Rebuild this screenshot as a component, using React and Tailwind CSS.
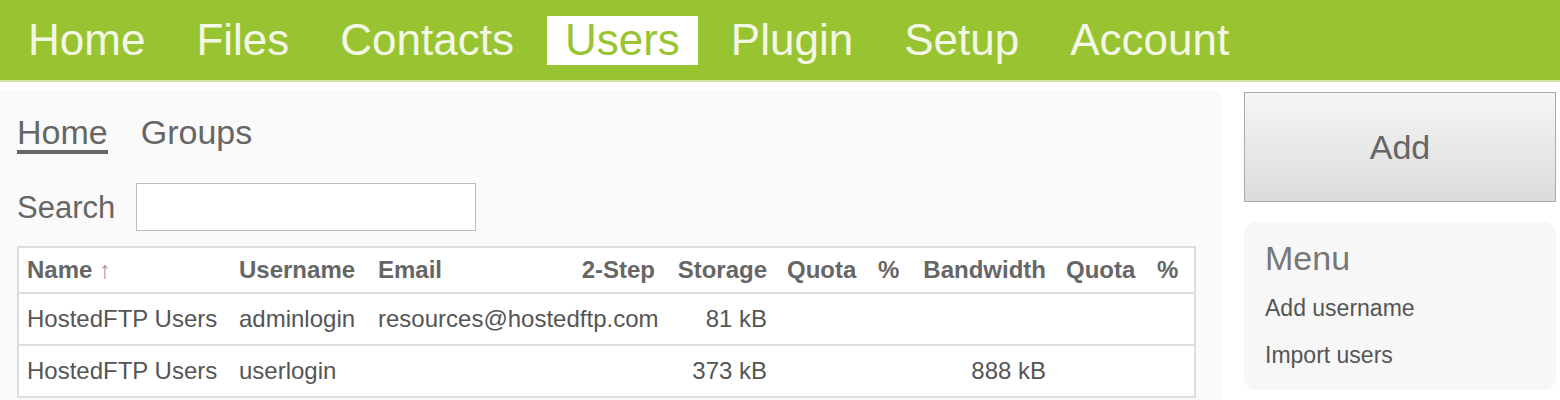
import React from "react";

const navItems = ["Home", "Files", "Contacts", "Users", "Plugin", "Setup", "Account"];

const columns = [
  { label: "Name", width: "w-[213px]", align: "text-left", sort: true },
  { label: "Username", width: "w-[139px]", align: "text-left" },
  { label: "Email", width: "w-[201px]", align: "text-left" },
  { label: "2-Step", width: "w-[96px]", align: "text-right" },
  { label: "Storage", width: "w-[112px]", align: "text-right" },
  { label: "Quota", width: "w-[91px]", align: "text-left" },
  { label: "%", width: "w-[43px]", align: "text-left" },
  { label: "Bandwidth", width: "w-[145px]", align: "text-right" },
  { label: "Quota", width: "w-[91px]", align: "text-left" },
  { label: "%", width: "w-[46px]", align: "text-left" },
];

const users = [
  ["HostedFTP Users", "adminlogin", "resources@hostedftp.com", "", "81 kB", "", "", "", "", ""],
  ["HostedFTP Users", "userlogin", "", "", "373 kB", "", "", "888 kB", "", ""],
];

const App = () => {
  return (
    <div className="min-h-screen bg-white font-['Liberation_Sans',Arial,sans-serif]">
      {/* top navigation */}
      <nav className="h-[82px] bg-[#99c432] border-b-2 border-[#d3e5a4] flex items-center pl-[10px] gap-[15px]">
        {navItems.map((item) => (
          <a
            key={item}
            href="#"
            className={
              item === "Users"
                ? "h-[49px] px-[18px] flex items-center bg-white text-[#99c432] text-[44px] leading-none"
                : "h-[49px] px-[18px] flex items-center text-[#f3f7e6] text-[44px] leading-none"
            }
          >
            {item}
          </a>
        ))}
      </nav>

      <div className="flex mt-[8px]">
        {/* main panel */}
        <div className="w-[1222px] bg-[#fafafa] rounded-tr-[10px] pl-[17px] pt-[25px] pr-[28px] pb-6">
          <div className="flex gap-[33px] text-[34px] leading-none text-[#666]">
            <span className="pb-[1px] border-b-4 border-[#666]">Home</span>
            <span className="pb-[1px] border-b-4 border-transparent">Groups</span>
          </div>

          <div className="flex items-center h-[48px] mt-[29px] gap-[21px]">
            <span className="text-[31px] leading-none text-[#666]">Search</span>
            <input
              type="text"
              className="w-[340px] h-[48px] bg-white border border-[#bbb] outline-none px-2 text-[22px]"
            />
          </div>

          <table className="mt-[15px] table-fixed border-collapse bg-white border-x-2 border-t-2 border-[#ddd] w-[1177px]">
            <colgroup>
              {columns.map((col, i) => (
                <col key={i} className={col.width} />
              ))}
            </colgroup>
            <thead>
              <tr className="h-[46px] border-b-2 border-[#ddd]">
                {columns.map((col, i) => (
                  <th
                    key={i}
                    className={`${col.align} pl-[8px] pr-[12px] text-[24px] font-bold text-[#666] whitespace-nowrap`}
                  >
                    {col.label}
                    {col.sort && <span className="font-normal text-[#999]"> ↑</span>}
                  </th>
                ))}
              </tr>
            </thead>
            <tbody>
              {users.map((row, r) => (
                <tr key={r} className="h-[52px] border-b-2 border-[#ddd]">
                  {row.map((cell, i) => (
                    <td
                      key={i}
                      className={`${columns[i].align} pl-[8px] pr-[12px] text-[24px] text-[#555] whitespace-nowrap overflow-visible`}
                    >
                      {cell}
                    </td>
                  ))}
                </tr>
              ))}
            </tbody>
          </table>
        </div>

        {/* sidebar */}
        <div className="w-[312px] ml-[22px] mt-[2px] flex flex-col">
          <button className="h-[110px] w-full border border-[#aaa] bg-gradient-to-b from-[#f5f5f5] to-[#dcdcdc] text-[34px] text-[#666] leading-none">
            Add
          </button>
          <div className="mt-[20px] h-[168px] bg-[#f7f7f7] rounded-xl px-[21px] pt-[19px]">
            <div className="text-[34px] leading-none text-[#777]">Menu</div>
            <div className="mt-[22px] text-[23px] leading-none text-[#555]">Add username</div>
            <div className="mt-[24px] text-[23px] leading-none text-[#555]">Import users</div>
          </div>
        </div>
      </div>
    </div>
  );
};

export default App;
